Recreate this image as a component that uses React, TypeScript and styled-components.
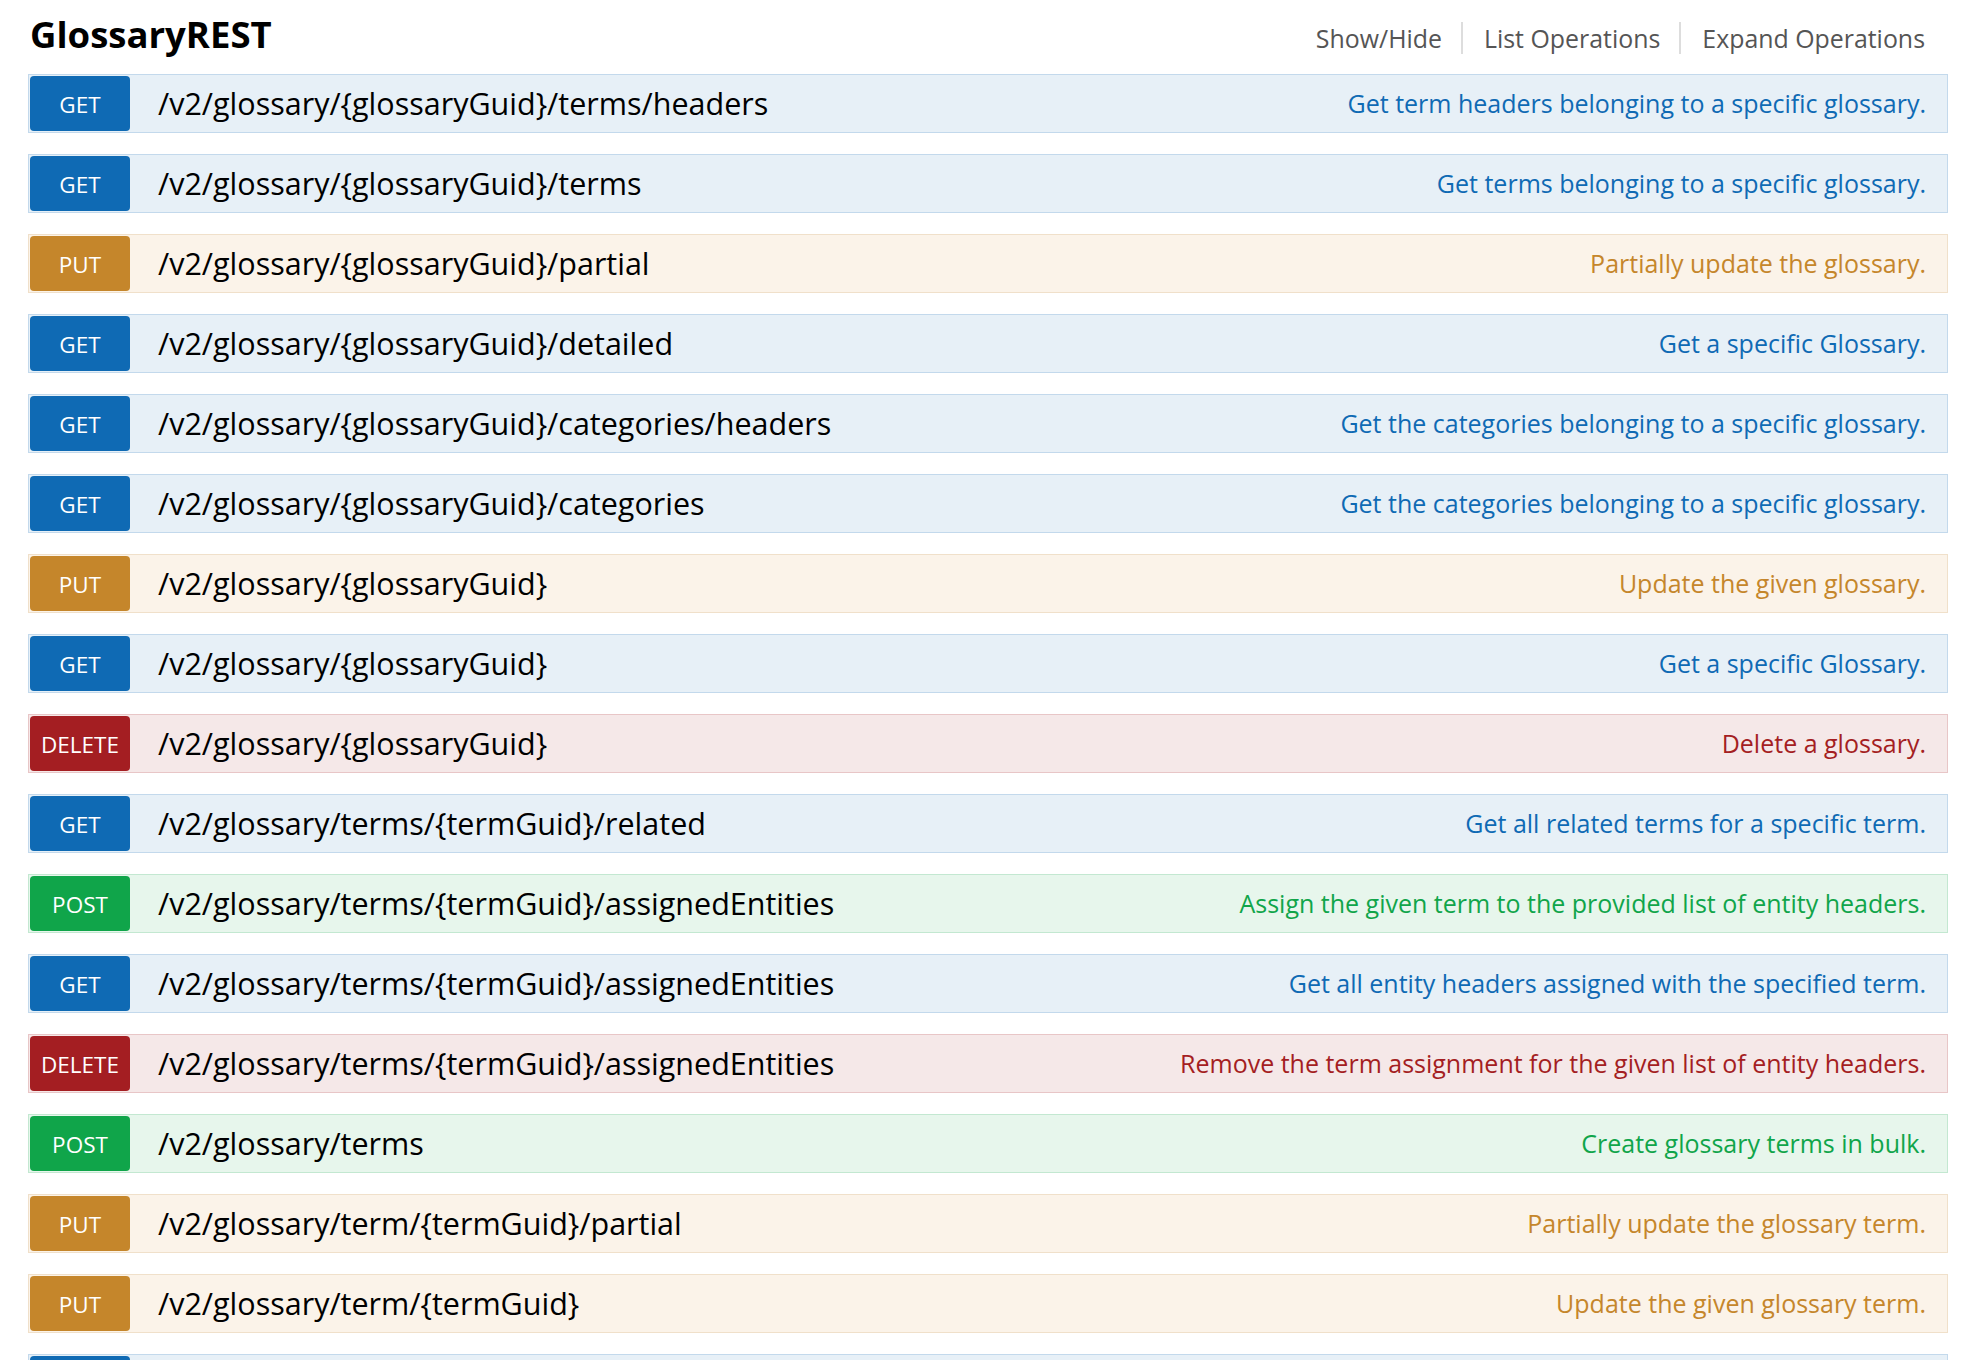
import React from 'react';
import styled, { createGlobalStyle } from 'styled-components';

type Method = 'GET' | 'PUT' | 'POST' | 'DELETE';

interface Operation {
  method: Method;
  path: string;
  summary: string;
}

const palette: Record<Method, { main: string; bg: string; border: string }> = {
  GET: { main: '#0f6ab4', bg: '#e7f0f7', border: '#c3d9ec' },
  PUT: { main: '#c5862b', bg: '#fbf3e9', border: '#f0e0ca' },
  POST: { main: '#10a54a', bg: '#e7f6ec', border: '#c3e8d1' },
  DELETE: { main: '#a41e22', bg: '#f5e8e8', border: '#e8c6c7' },
};

const operations: Operation[] = [
  { method: 'GET', path: '/v2/glossary/{glossaryGuid}/terms/headers', summary: 'Get term headers belonging to a specific glossary.' },
  { method: 'GET', path: '/v2/glossary/{glossaryGuid}/terms', summary: 'Get terms belonging to a specific glossary.' },
  { method: 'PUT', path: '/v2/glossary/{glossaryGuid}/partial', summary: 'Partially update the glossary.' },
  { method: 'GET', path: '/v2/glossary/{glossaryGuid}/detailed', summary: 'Get a specific Glossary.' },
  { method: 'GET', path: '/v2/glossary/{glossaryGuid}/categories/headers', summary: 'Get the categories belonging to a specific glossary.' },
  { method: 'GET', path: '/v2/glossary/{glossaryGuid}/categories', summary: 'Get the categories belonging to a specific glossary.' },
  { method: 'PUT', path: '/v2/glossary/{glossaryGuid}', summary: 'Update the given glossary.' },
  { method: 'GET', path: '/v2/glossary/{glossaryGuid}', summary: 'Get a specific Glossary.' },
  { method: 'DELETE', path: '/v2/glossary/{glossaryGuid}', summary: 'Delete a glossary.' },
  { method: 'GET', path: '/v2/glossary/terms/{termGuid}/related', summary: 'Get all related terms for a specific term.' },
  { method: 'POST', path: '/v2/glossary/terms/{termGuid}/assignedEntities', summary: 'Assign the given term to the provided list of entity headers.' },
  { method: 'GET', path: '/v2/glossary/terms/{termGuid}/assignedEntities', summary: 'Get all entity headers assigned with the specified term.' },
  { method: 'DELETE', path: '/v2/glossary/terms/{termGuid}/assignedEntities', summary: 'Remove the term assignment for the given list of entity headers.' },
  { method: 'POST', path: '/v2/glossary/terms', summary: 'Create glossary terms in bulk.' },
  { method: 'PUT', path: '/v2/glossary/term/{termGuid}/partial', summary: 'Partially update the glossary term.' },
  { method: 'PUT', path: '/v2/glossary/term/{termGuid}', summary: 'Update the given glossary term.' },
  { method: 'GET', path: '/v2/glossary/term/{termGuid}', summary: 'Get a specific glossary term.' },
];

const GlobalStyle = createGlobalStyle`
  html, body {
    margin: 0;
    padding: 0;
    background: #ffffff;
    font-family: "Open Sans", "Liberation Sans", sans-serif;
  }
`;

const Page = styled.div`
  padding: 0 34px 0 28px;
`;

const Header = styled.div`
  display: flex;
  justify-content: space-between;
  align-items: flex-end;
  height: 74px;
  padding-left: 2px;
  padding-right: 23px;
  box-sizing: border-box;
`;

const Title = styled.h2`
  margin: 0 0 17px;
  font-size: 36.5px;
  line-height: 46px;
  font-weight: 700;
  color: #000;
`;

const Links = styled.ul`
  display: flex;
  list-style: none;
  margin: 0 0 20px;
  padding: 0;
`;

const LinkItem = styled.li`
  font-size: 24.9px;
  line-height: 32px;
  color: #555;
  padding: 0 19px 0 21px;
  border-left: 2px solid #dddddd;

  &:first-child {
    border-left: none;
  }

  &:last-child {
    padding-right: 0;
  }
`;

const OperationList = styled.ul`
  display: flex;
  flex-direction: column;
  gap: 21px;
  list-style: none;
  margin: 0;
  padding: 0;
`;

const Row = styled.li<{ $method: Method }>`
  display: flex;
  align-items: center;
  height: 59px;
  box-sizing: border-box;
  padding: 1px;
  background: ${({ $method }) => palette[$method].bg};
  border: 1px solid ${({ $method }) => palette[$method].border};
`;

const Badge = styled.span<{ $method: Method }>`
  display: flex;
  align-items: center;
  justify-content: center;
  flex: 0 0 100px;
  height: 100%;
  box-sizing: border-box;
  padding-top: 2px;
  border-radius: 4px;
  background: ${({ $method }) => palette[$method].main};
  color: #fff;
  font-size: 22.5px;
`;

const Path = styled.span`
  margin-left: 28px;
  margin-bottom: 2px;
  font-size: 30.5px;
  color: #000;
  white-space: nowrap;
`;

const Summary = styled.span<{ $method: Method }>`
  margin-left: auto;
  margin-bottom: 2px;
  padding-right: 20px;
  font-size: 25px;
  color: ${({ $method }) => palette[$method].main};
  white-space: nowrap;
`;

export default function App() {
  return (
    <Page>
      <GlobalStyle />
      <Header>
        <Title>GlossaryREST</Title>
        <Links>
          <LinkItem>Show/Hide</LinkItem>
          <LinkItem>List Operations</LinkItem>
          <LinkItem>Expand Operations</LinkItem>
        </Links>
      </Header>
      <OperationList>
        {operations.map((op, i) => (
          <Row key={i} $method={op.method}>
            <Badge $method={op.method}>{op.method}</Badge>
            <Path>{op.path}</Path>
            <Summary $method={op.method}>{op.summary}</Summary>
          </Row>
        ))}
      </OperationList>
    </Page>
  );
}
